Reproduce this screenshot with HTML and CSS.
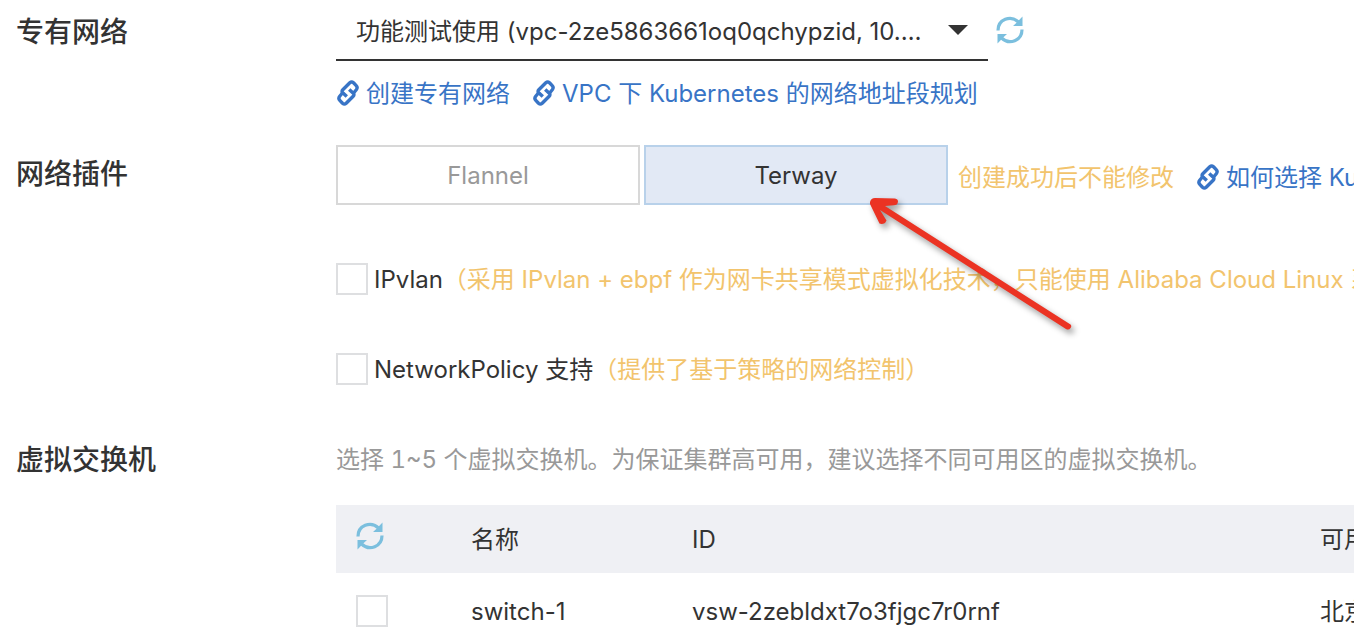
FILE: index.html
```html
<!DOCTYPE html>
<html lang="zh-CN">
<head>
<meta charset="utf-8">
<title>集群网络配置</title>
<link rel="stylesheet" href="styles.css">
</head>
<body>
<svg class="defs" aria-hidden="true">
  <symbol id="icon-link" viewBox="0 0 22 26">
    <g fill="none" stroke="currentColor" stroke-width="3.4" stroke-linejoin="round">
      <path d="M15.800 14 19.300 9.700Q21 7.500 19.200 5.600L16.500 2.800Q14.600 1.200 12.800 2.800L5.800 9.800Q4.200 11.400 6 13L9.800 16.600"/>
      <path d="M6.200 12 2.700 16.300Q1 18.500 2.800 20.400L5.500 23.200Q7.400 24.800 9.200 23.200L16.200 16.200Q17.800 14.600 16 13L12.200 9.400"/>
    </g>
  </symbol>
  <symbol id="icon-refresh" viewBox="0 0 28 28">
    <path fill="none" stroke="currentColor" stroke-width="3.2" d="M2 14.5C2 3.5 14.500-1.500 22.500 6M26 13.500C26 24.500 13.500 29.500 5.500 22"/>
    <path fill="currentColor" d="M26.500.5V10H17L20 7.300ZM1.500 27.500V18H11L8 20.700Z"/>
  </symbol>
</svg>
<main class="form">
  <section class="row row-vpc">
    <label class="title" for="vpc">专有网络</label>
    <div class="content">
      <div class="line">
        <div class="picker">
          <select id="vpc"><option>功能测试使用 (vpc-2ze5863661oq0qchypzid, 10.…</option></select>
          <svg class="caret" viewBox="0 0 20 10" aria-hidden="true"><path fill="currentColor" d="M0 0H20L10 10Z"/></svg>
        </div>
        <button class="refresh" type="button" aria-label="刷新"><svg><use href="#icon-refresh"/></svg></button>
      </div>
      <div class="links">
        <a class="link" href="#"><svg><use href="#icon-link"/></svg>创建专有网络</a>
        <a class="link" href="#"><svg><use href="#icon-link"/></svg>VPC 下 Kubernetes 的网络地址段规划</a>
      </div>
    </div>
  </section>

  <section class="row row-plugin">
    <h2 class="title">网络插件</h2>
    <div class="content">
      <div class="line">
        <div class="choices">
          <button class="choice" type="button">Flannel</button>
          <button class="choice selected" type="button">Terway</button>
        </div>
        <div class="notes">
          <span class="warn">创建成功后不能修改</span>
          <a class="link" href="#"><svg><use href="#icon-link"/></svg>如何选择 Kubernetes 集群的网络插件</a>
        </div>
      </div>
      <label class="check"><input type="checkbox"><span class="caption">IPvlan<span class="warn">（采用 IPvlan + ebpf 作为网卡共享模式虚拟化技术，只能使用 Alibaba Cloud Linux 系统）</span></span></label>
      <label class="check"><input type="checkbox"><span class="caption">NetworkPolicy 支持<span class="warn">（提供了基于策略的网络控制）</span></span></label>
    </div>
  </section>

  <section class="row row-switch">
    <h2 class="title">虚拟交换机</h2>
    <div class="content">
      <p class="hint">选择 1~5 个虚拟交换机。为保证集群高可用，建议选择不同可用区的虚拟交换机。</p>
      <table class="switches">
        <colgroup><col class="c-pick"><col class="c-name"><col class="c-id"><col class="c-zone"></colgroup>
        <thead>
          <tr><th><button class="refresh" type="button" aria-label="刷新列表"><svg><use href="#icon-refresh"/></svg></button></th><th>名称</th><th>ID</th><th>可用区</th></tr>
        </thead>
        <tbody>
          <tr><td><input type="checkbox" aria-label="switch-1"></td><td>switch-1</td><td>vsw-2zebldxt7o3fjgc7r0rnf</td><td>北京 可用区</td></tr>
        </tbody>
      </table>
    </div>
  </section>

  <svg class="arrow" viewBox="0 0 220 150" aria-hidden="true">
    <path d="M10 12Q11 8 15 8L35 8.500Q38 9 38 11.500L37.500 13.500Q37 15 34 15.200L25 16 210.500 134.500Q212 136 210.500 138Q209 140.500 206 139L20 20 26.500 30.500 25 33Q22 34.500 19.500 33.500L10 14Z"/>
  </svg>
</main>
</body>
</html>
```
FILE: styles.css
```css
* { box-sizing: border-box; }

body {
  margin: 0;
  background: #fff;
  color: #333;
  font: 24px/32px Inter, "Noto Sans CJK SC", sans-serif;
  white-space: nowrap;
  overflow: hidden;
}

.defs { display: none; }
svg { display: block; }
button, select { font: inherit; color: inherit; border-radius: 0; }

.form { position: relative; padding: 3px 0 0 16px; }

.row { display: grid; grid-template-columns: 320px minmax(0, 1fr); }
.row-plugin { margin-top: 36px; }
.row-switch { margin-top: 58px; }

.title { margin: 0; font-size: 28px; font-weight: 500; line-height: 58px; }
.row-switch .title { line-height: 34px; }

.line { display: flex; align-items: center; }

.picker { position: relative; width: 652px; }
.picker select {
  display: block;
  width: 100%;
  height: 58px;
  padding: 2px 52px 0 20px;
  border: 0;
  border-bottom: 2px solid #333;
  background: none;
  appearance: none;
  text-overflow: ellipsis;
}
.caret { position: absolute; right: 20px; top: 22px; width: 20px; height: 10px; pointer-events: none; }

.refresh { padding: 0; border: 0; background: none; color: #7bbfde; }
.refresh svg { width: 28px; height: 28px; }
.picker + .refresh { margin: 0 0 4px 8px; }

.links { display: flex; gap: 22px; margin-top: 17px; margin-bottom: -1px; }
.link { display: inline-flex; align-items: center; gap: 7px; color: #3874c6; text-decoration: none; }
.link svg { width: 22px; height: 26px; margin: 0 0 2px 1px; flex: none; }

.choices { display: flex; gap: 4px; }
.choice {
  width: 304px;
  height: 60px;
  padding: 2px 0 0;
  border: 2px solid #d8d8d8;
  background: #fff;
  color: #999;
}
.choice.selected { border-color: #b8d1ea; background: #e2e9f5; color: #333; }

.warn { color: #f2c46d; }
.notes { display: flex; gap: 22px; padding: 6px 0 0 10px; }

.check { display: flex; align-items: center; gap: 6px; margin-top: 58px; }
.check .caption { margin: 1px 0 -1px; }
input[type="checkbox"] {
  display: block;
  width: 32px;
  height: 32px;
  margin: 0;
  flex: none;
  border: 2px solid #dedfe1;
  background: #fff;
  appearance: none;
}
input[type="checkbox"]:checked { background: #3874c6; }

.hint { margin: 0 0 29px; padding-top: 1px; color: #999; font-variant-numeric: tabular-nums; }

.switches { width: 1200px; table-layout: fixed; border-collapse: collapse; }
.c-pick { width: 115px; }
.c-name { width: 221px; }
.c-id { width: 628px; }
th, td { padding: 2px 20px 0; text-align: left; font-weight: 400; }
th:first-child, td:first-child { padding-top: 0; }
th { height: 68px; background: #eff0f4; }
td { height: 76px; }
th .refresh { display: block; margin-bottom: 6px; }

.arrow {
  position: absolute;
  left: 860px;
  top: 190px;
  width: 220px;
  height: 150px;
  fill: #eb3323;
  filter: drop-shadow(3px 4px 3px rgba(0, 0, 0, 0.4));
  pointer-events: none;
}
```
